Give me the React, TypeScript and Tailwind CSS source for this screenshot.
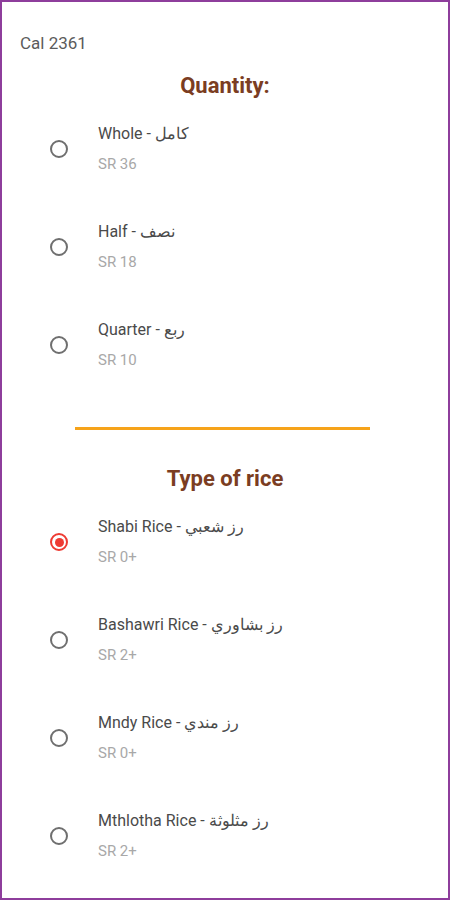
import React, { useState } from 'react';

type Option = { id: string; en: string; ar: string; price: string };

const quantities: Option[] = [
  { id: 'whole', en: 'Whole', ar: 'كامل', price: 'SR 36' },
  { id: 'half', en: 'Half', ar: 'نصف', price: 'SR 18' },
  { id: 'quarter', en: 'Quarter', ar: 'ربع', price: 'SR 10' },
];

const rices: Option[] = [
  { id: 'shabi', en: 'Shabi Rice', ar: 'رز شعبي', price: 'SR 0+' },
  { id: 'bashawri', en: 'Bashawri Rice', ar: 'رز بشاوري', price: 'SR 2+' },
  { id: 'mndy', en: 'Mndy Rice', ar: 'رز مندي', price: 'SR 0+' },
  { id: 'mthlotha', en: 'Mthlotha Rice', ar: 'رز مثلوثة', price: 'SR 2+' },
];

function Radio({ checked }: { checked: boolean }) {
  return (
    <div
      className={
        'w-[18px] h-[18px] rounded-full border-2 flex items-center justify-center flex-shrink-0 ' +
        (checked ? 'border-[#ee3b33]' : 'border-[#6f6f6f]')
      }
    >
      {checked && <div className="w-[9px] h-[9px] rounded-full bg-[#ee3b33]" />}
    </div>
  );
}

function OptionRow({ opt, checked, onSelect }: { opt: Option; checked: boolean; onSelect: () => void }) {
  return (
    <button onClick={onSelect} className="flex items-center h-[50px] pl-[48px] text-left w-full">
      <Radio checked={checked} />
      <div className="ml-[30px] flex flex-col">
        <span className="text-[16px] leading-[20px] text-[#4a4a4a]">
          {opt.en} - {opt.ar}
        </span>
        <span className="mt-[10px] text-[15px] leading-[20px] text-[#a8a8a8]">{opt.price}</span>
      </div>
    </button>
  );
}

export default function App() {
  const [qty, setQty] = useState<string | null>(null);
  const [rice, setRice] = useState('shabi');

  return (
    <div
      className="w-[450px] h-[900px] bg-white border-2 border-[#8e3d9c] overflow-hidden"
      style={{ fontFamily: 'Roboto, "Noto Sans", sans-serif' }}
    >
      <div className="pt-[31px] pl-[18px] text-[17px] leading-[20px] text-[#5b5b5b]">Cal 2361</div>

      {/* Quantity */}
      <h2 className="mt-[19px] text-center text-[22px] leading-[28px] font-bold text-[#7b3d22]">Quantity:</h2>
      <div className="mt-[24px] flex flex-col gap-[48px]">
        {quantities.map((q) => (
          <OptionRow key={q.id} opt={q} checked={qty === q.id} onSelect={() => setQty(q.id)} />
        ))}
      </div>

      <div className="mt-[57px] ml-[73px] mr-[78px] h-[3px] bg-[#f6a31a]" />

      {/* Rice */}
      <h2 className="mt-[35px] text-center text-[22px] leading-[28px] font-bold text-[#7b3d22]">Type of rice</h2>
      <div className="mt-[24px] flex flex-col gap-[48px]">
        {rices.map((r) => (
          <OptionRow key={r.id} opt={r} checked={rice === r.id} onSelect={() => setRice(r.id)} />
        ))}
      </div>
    </div>
  );
}
